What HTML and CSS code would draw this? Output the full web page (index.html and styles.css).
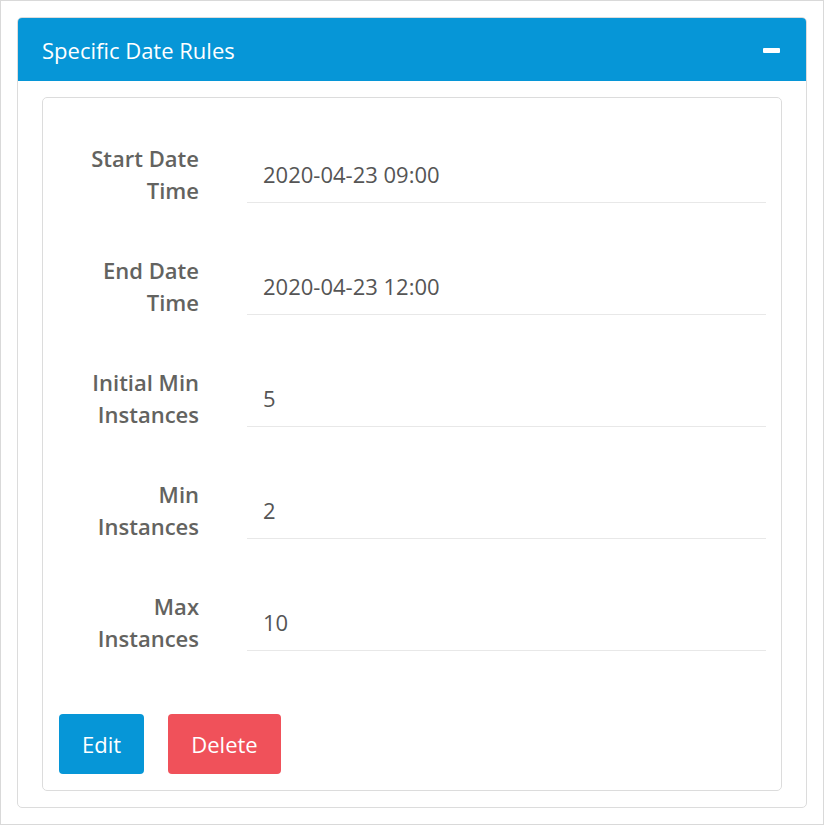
FILE: index.html
```html
<!DOCTYPE html>
<html>
<head>
<meta charset="utf-8">
<link rel="stylesheet" href="styles.css">
</head>
<body>
<div class="frame">
  <div class="panel">
    <div class="panel-header">
      <span class="panel-title">Specific Date Rules</span>
      <span class="collapse-icon"></span>
    </div>
    <div class="panel-body">
      <div class="card">
        <div class="row">
          <div class="label">Start Date<br>Time</div>
          <div class="field">2020-04-23 09:00</div>
        </div>
        <div class="row">
          <div class="label">End Date<br>Time</div>
          <div class="field">2020-04-23 12:00</div>
        </div>
        <div class="row">
          <div class="label">Initial Min<br>Instances</div>
          <div class="field">5</div>
        </div>
        <div class="row">
          <div class="label">Min<br>Instances</div>
          <div class="field">2</div>
        </div>
        <div class="row">
          <div class="label">Max<br>Instances</div>
          <div class="field">10</div>
        </div>
        <div class="actions">
          <button class="btn btn-edit">Edit</button>
          <button class="btn btn-delete">Delete</button>
        </div>
      </div>
    </div>
  </div>
</div>
</body>
</html>
```
FILE: styles.css
```css
* { box-sizing: border-box; }
html, body { margin: 0; padding: 0; background: #fff; }
body {
  font-family: "Open Sans", "Noto Sans", sans-serif;
  font-size: 22px;
  width: 824px;
  height: 825px;
}
.frame {
  width: 824px;
  height: 825px;
  border: 1px solid #d9d9d9;
  padding: 16px;
}
.panel {
  border: 1px solid #dcdcdc;
  border-radius: 5px;
  overflow: hidden;
  height: 791px;
}
.panel-header {
  background: #0696d7;
  height: 63px;
  padding: 0 24px;
  display: flex;
  align-items: center;
  justify-content: space-between;
  color: #fff;
}
.panel-title {
  font-size: 22px;
  line-height: 30px;
}
.collapse-icon {
  width: 17px;
  height: 5px;
  background: #fff;
  border-radius: 1px;
  margin-right: 2px;
  margin-top: 1px;
}
.panel-body {
  padding: 16px 24px;
}
.card {
  border: 1px solid #dcdcdc;
  border-radius: 5px;
  padding: 44px 15px 15px 16px;
  height: 694px;
}
.row {
  display: flex;
  align-items: center;
  height: 64px;
  margin-bottom: 48px;
}
.label {
  width: 140px;
  text-align: right;
  font-weight: 600;
  color: #636360;
  line-height: 32px;
}
.field {
  flex: 1;
  margin-left: 48px;
  height: 58px;
  border-bottom: 1px solid #e8e8e8;
  padding-left: 16px;
  display: flex;
  align-items: center;
  color: #555;
  padding-top: 1px;
}
.actions {
  display: flex;
  gap: 24px;
  margin-top: 60px;
}
.btn {
  font-family: "Open Sans", "Noto Sans", sans-serif;
  font-size: 22px;
  color: #fff;
  border: none;
  border-radius: 4px;
  height: 60px;
  padding: 0;
}
.btn-edit { background: #0696d7; width: 85px; }
.btn-delete { background: #f0515a; width: 113px; }
```
